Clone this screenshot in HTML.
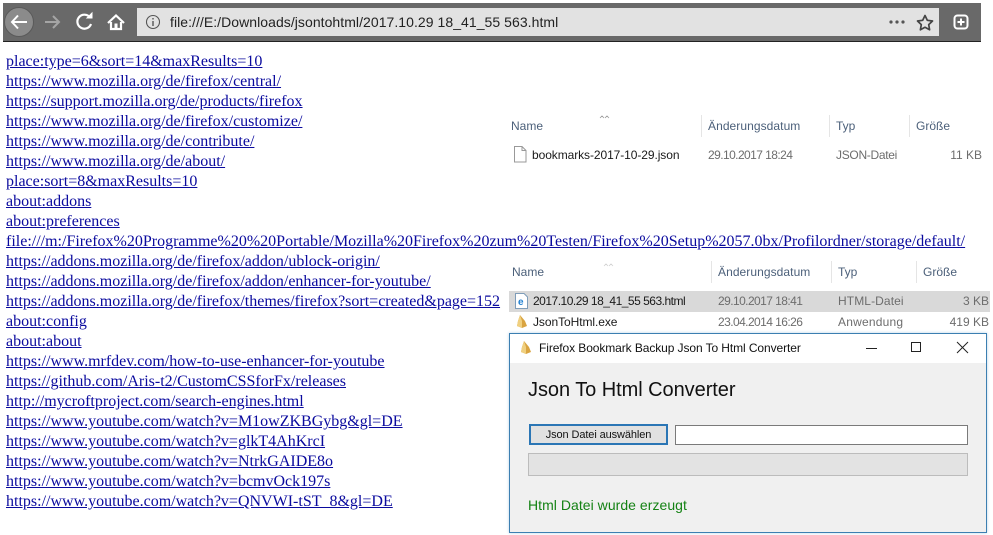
<!DOCTYPE html>
<html><head><meta charset="utf-8"><style>
html,body{margin:0;padding:0;background:#fff;width:993px;height:535px;overflow:hidden}
body{position:relative;font-family:"Liberation Sans",sans-serif}
.a{position:absolute;white-space:nowrap}
#links{position:absolute;left:6px;top:52px;font:16px/20px "Liberation Serif",serif}
#links a{display:block;color:#0a0a9e;text-decoration:underline;white-space:nowrap}
.h{font-size:12px;color:#4c607a;line-height:14px}
.g{font-size:12px;color:#6d6d6d;line-height:14px}
.d{letter-spacing:-.57px}
.n{font-size:12px;color:#1a1a1a;line-height:14px}
.s{position:absolute;width:1px;background:#e5e5e5}
</style></head><body>
<div class="a" style="left:3px;top:3px;width:978px;height:38px;background:#696969;border-bottom:1px solid #222"></div>
<div class="a" style="left:137px;top:8px;width:802px;height:28px;background:#e2e2e2"></div>
<svg class="a" style="left:3px;top:3px" width="150" height="38" viewBox="0 0 150 38" fill="none">
<circle cx="16" cy="19" r="14.5" fill="#8b8b8b" stroke="#5a5a5a"/>
<path d="M9 19H24M15 12.500L9 19L15 25.500" stroke="#fff" stroke-width="2"/>
<path d="M42 19H56M50 13L56 19L50 25" stroke="#a5a5a5" stroke-width="2"/>
<path d="M87 14.500A7 7 0 1 0 88 21" stroke="#fff" stroke-width="2.200"/>
<path d="M84 15H89V10Z" fill="#fff" stroke="#fff"/>
<path d="M105 20L113 12.500L121 20" stroke="#fff" stroke-width="2.200"/>
<path d="M108 19V26H118V19" stroke="#fff" stroke-width="2.200"/>
<rect x="111.500" y="20.500" width="3" height="5" fill="#fff"/>
</svg>
<svg class="a" style="left:145px;top:14px" width="16" height="16" viewBox="0 0 16 16" fill="none">
<circle cx="8" cy="8" r="6.500" stroke="#555" stroke-width="1.100"/>
<path d="M8 7V12M8 4V5.500" stroke="#555" stroke-width="1.400"/>
</svg>
<div class="a" style="left:170px;top:15px;font-size:14px;line-height:15px;color:#222;letter-spacing:.05px">file:///E:/Downloads/jsontohtml/2017.10.29 18_41_55 563.html</div>
<svg class="a" style="left:885px;top:12px" width="90" height="22" viewBox="0 0 90 22" fill="none">
<circle cx="6" cy="10" r="1.600" fill="#555"/><circle cx="12" cy="10" r="1.600" fill="#555"/><circle cx="18" cy="10" r="1.600" fill="#555"/>
<path d="M40 3.500L42.300 8.300L47.500 9L43.700 12.600L44.600 17.800L40 15.300L35.400 17.800L36.300 12.600L32.500 9L37.700 8.300Z" stroke="#444" stroke-width="1.700" stroke-linejoin="round"/>
<rect x="69.500" y="3.500" width="13" height="13" rx="3" stroke="#fff" stroke-width="2"/>
<path d="M76 6.500V13.500M72.500 10H79.500" stroke="#fff" stroke-width="2"/>
</svg>

<div id="links">
<a>place:type=6&amp;sort=14&amp;maxResults=10</a>
<a>https://www.mozilla.org/de/firefox/central/</a>
<a>https://support.mozilla.org/de/products/firefox</a>
<a>https://www.mozilla.org/de/firefox/customize/</a>
<a>https://www.mozilla.org/de/contribute/</a>
<a>https://www.mozilla.org/de/about/</a>
<a>place:sort=8&amp;maxResults=10</a>
<a>about:addons</a>
<a>about:preferences</a>
<a>file:///m:/Firefox%20Programme%20%20Portable/Mozilla%20Firefox%20zum%20Testen/Firefox%20Setup%2057.0bx/Profilordner/storage/default/</a>
<a>https://addons.mozilla.org/de/firefox/addon/ublock-origin/</a>
<a>https://addons.mozilla.org/de/firefox/addon/enhancer-for-youtube/</a>
<a>https://addons.mozilla.org/de/firefox/themes/firefox?sort=created&amp;page=152</a>
<a>about:config</a>
<a>about:about</a>
<a>https://www.mrfdev.com/how-to-use-enhancer-for-youtube</a>
<a>https://github.com/Aris-t2/CustomCSSforFx/releases</a>
<a>http://mycroftproject.com/search-engines.html</a>
<a>https://www.youtube.com/watch?v=M1owZKBGybg&amp;gl=DE</a>
<a>https://www.youtube.com/watch?v=glkT4AhKrcI</a>
<a>https://www.youtube.com/watch?v=NtrkGAIDE8o</a>
<a>https://www.youtube.com/watch?v=bcmvOck197s</a>
<a>https://www.youtube.com/watch?v=QNVWI-tST_8&amp;gl=DE</a>
</div>

<svg class="a" style="left:599px;top:114px" width="12" height="5" viewBox="0 0 12 5" fill="none" stroke="#9a9a9a" stroke-width=".8"><path d="M1 4L3 2L5 4M6 4L8 2L10 4"/></svg>
<div class="a h" style="left:511px;top:119px">Name</div>
<div class="a h" style="left:708px;top:119px;letter-spacing:.07px">Änderungsdatum</div>
<div class="a h" style="left:836px;top:119px">Typ</div>
<div class="a h" style="left:916px;top:119px">Größe</div>
<div class="s" style="left:701px;top:115px;height:22px"></div>
<div class="s" style="left:829px;top:115px;height:22px"></div>
<div class="s" style="left:909px;top:115px;height:22px"></div>
<svg class="a" style="left:513px;top:146px" width="14" height="17" viewBox="0 0 14 17" fill="none"><path d="M1.500 .500H9L13 4.500V16H1.500Z" fill="#fff" stroke="#999"/><path d="M9 .500V4.500H13" stroke="#999"/></svg>
<div class="a n" style="left:532px;top:148px;letter-spacing:-.08px">bookmarks-2017-10-29.json</div>
<div class="a g d" style="left:708px;top:148px">29.10.2017 18:24</div>
<div class="a g" style="left:836px;top:148px;letter-spacing:-.3px">JSON-Datei</div>
<div class="a g" style="right:11px;top:148px">11 KB</div>

<svg class="a" style="left:603px;top:262px" width="12" height="5" viewBox="0 0 12 5" fill="none" stroke="#d0d0d0" stroke-width=".8"><path d="M1 4L3 2L5 4M6 4L8 2L10 4"/></svg>
<div class="a h" style="left:512px;top:265px">Name</div>
<div class="a h" style="left:718px;top:265px;letter-spacing:.07px">Änderungsdatum</div>
<div class="a h" style="left:838px;top:265px">Typ</div>
<div class="a h" style="left:923px;top:265px">Größe</div>
<div class="s" style="left:711px;top:261px;height:22px"></div>
<div class="s" style="left:831px;top:261px;height:22px"></div>
<div class="s" style="left:916px;top:261px;height:22px"></div>
<div class="a" style="left:509px;top:291px;width:481px;height:21px;background:#d9d9d9"></div>
<svg class="a" style="left:515px;top:293px" width="13" height="16" viewBox="0 0 13 16"><path d="M.500 .500H9L12.500 4V15.500H.500Z" fill="#fff" stroke="#7f9db9"/><text x="3" y="12" font-size="10" font-weight="bold" fill="#1f7fd0" font-family="Liberation Sans">e</text></svg>
<div class="a n" style="left:533px;top:294px;letter-spacing:-.5px">2017.10.29 18_41_55 563.html</div>
<div class="a g d" style="left:718px;top:294px">29.10.2017 18:41</div>
<div class="a g" style="left:838px;top:294px;letter-spacing:.1px">HTML-Datei</div>
<div class="a g" style="right:4px;top:294px">3 KB</div>
<svg class="a" style="left:515px;top:314px" width="14" height="15" viewBox="0 0 14 15"><path d="M5 1L10 7L12 12L7 14L2 12L3 7Z" fill="#d9a441"/><path d="M5 1L7 7L7 14L2 12L3 7Z" fill="#f0d080"/></svg>
<div class="a n" style="left:533px;top:315px;letter-spacing:-.07px">JsonToHtml.exe</div>
<div class="a g d" style="left:718px;top:315px">23.04.2014 16:26</div>
<div class="a g" style="left:838px;top:315px;letter-spacing:.2px">Anwendung</div>
<div class="a g" style="right:4px;top:315px">419 KB</div>

<div class="a" style="left:509px;top:333px;width:476px;height:198px;background:#f0f0f0;border:1px solid #3c7fb1;box-shadow:0 0 3px #b9d3e6"></div>
<div class="a" style="left:510px;top:334px;width:476px;height:29px;background:#fff"></div>
<svg class="a" style="left:519px;top:340px" width="14" height="15" viewBox="0 0 14 15"><path d="M5 1L10 7L12 12L7 14L2 12L3 7Z" fill="#d9a441"/><path d="M5 1L7 7L7 14L2 12L3 7Z" fill="#f0d080"/></svg>
<div class="a" style="left:539px;top:341px;font-size:12px;line-height:14px;color:#111;letter-spacing:-.09px">Firefox Bookmark Backup Json To Html Converter</div>
<svg class="a" style="left:860px;top:338px" width="115" height="20" viewBox="0 0 115 20" fill="none" stroke="#222">
<path d="M6 10.500H17"/><rect x="51.500" y="4.500" width="9" height="9"/><path d="M97 4L108 15M108 4L97 15"/>
</svg>
<div class="a" style="left:528px;top:379px;font-size:20px;line-height:23px;color:#111;letter-spacing:-.05px">Json To Html Converter</div>
<div class="a" style="left:529px;top:424px;width:135px;height:17px;background:#e1e1e1;border:2px solid #2b76b5;font-size:11px;line-height:19px;text-align:center;color:#111;letter-spacing:-.1px">Json Datei auswählen</div>
<div class="a" style="left:675px;top:425px;width:291px;height:18px;background:#fff;border:1px solid #7a7a7a"></div>
<div class="a" style="left:528px;top:453px;width:438px;height:21px;background:#e3e3e3;border:1px solid #bcbcbc"></div>
<div class="a" style="left:528px;top:497px;font-size:14px;line-height:16px;color:#148214;letter-spacing:.04px">Html Datei wurde erzeugt</div>
</body></html>
